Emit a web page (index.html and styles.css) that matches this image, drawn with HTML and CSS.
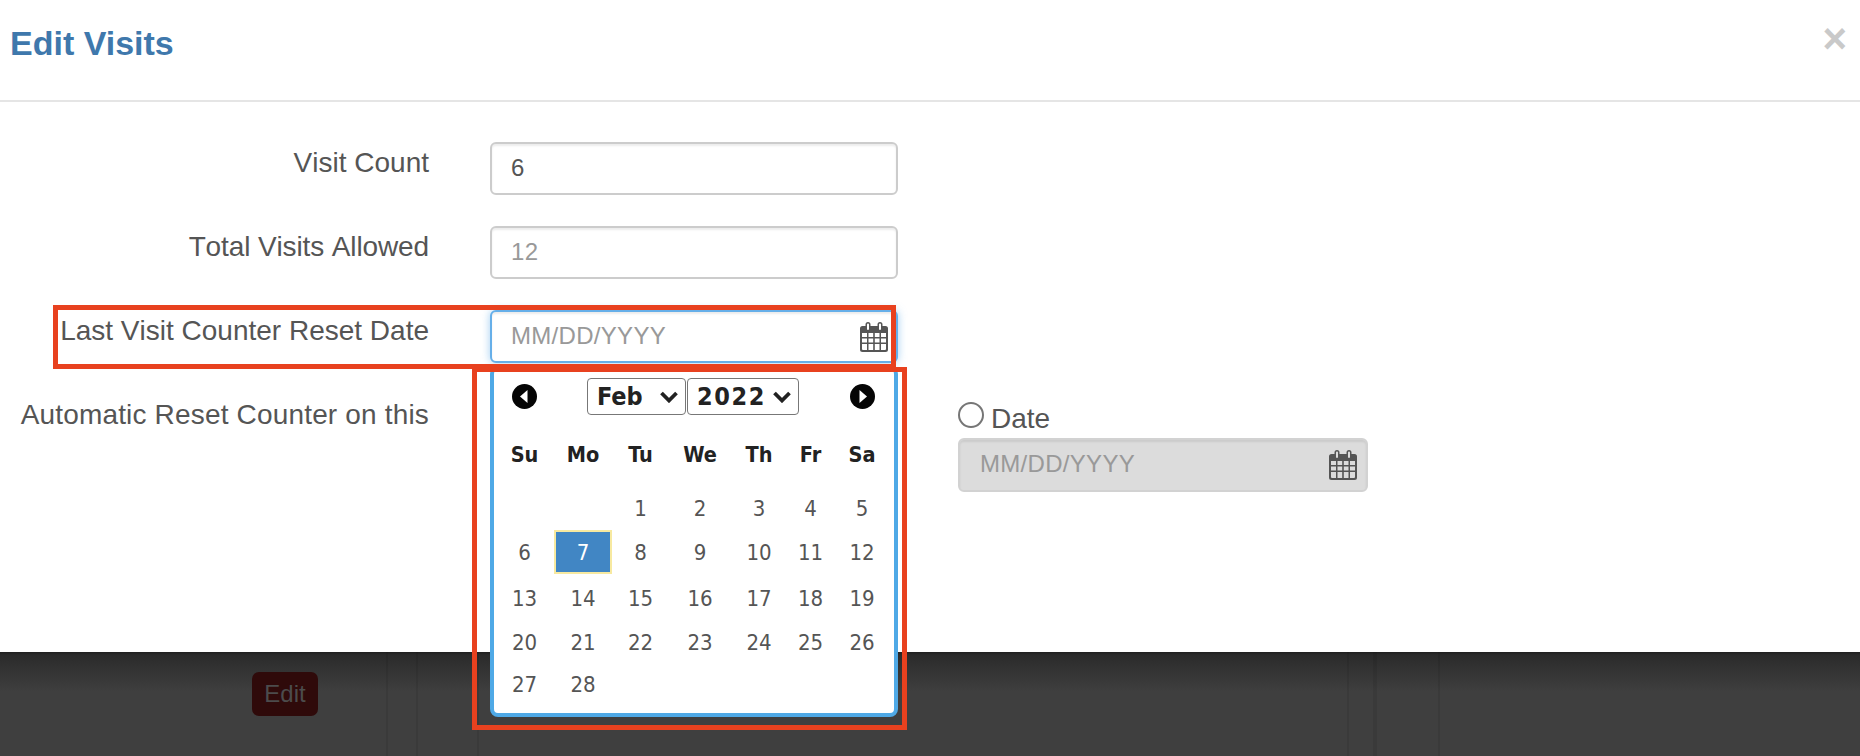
FILE: index.html
```html
<!DOCTYPE html>
<html lang="en">
<head>
<meta charset="utf-8">
<title>Edit Visits</title>
<link rel="stylesheet" href="styles.css">
</head>
<body>
<svg class="sprite" width="0" height="0" aria-hidden="true">
  <defs>
    <symbol id="cal" viewBox="0 0 28 30">
      <path fill="#555" fill-rule="evenodd" d="M2.5 4H5.5V2.5a2.5 2.5 0 0 1 5 0V4H17.500V2.500a2.500 2.500 0 0 1 5 0V4H25.500A2.500 2.500 0 0 1 28 6.500V27.500A2.500 2.500 0 0 1 25.500 30H2.500A2.500 2.500 0 0 1 0 27.500V6.500A2.500 2.500 0 0 1 2.500 4ZM7 2.500V7a1 1 0 0 0 2 0V2.500a1 1 0 0 0-2 0ZM19 2.500V7a1 1 0 0 0 2 0V2.500a1 1 0 0 0-2 0ZM2 11V15H7V11ZM8.500 11V15H13.200V11ZM14.800 11V15H19.500V11ZM21 11V15H26V11ZM2 16.500V20.500H7V16.500ZM8.500 16.500V20.500H13.200V16.500ZM14.800 16.500V20.500H19.500V16.500ZM21 16.500V20.500H26V16.500ZM2 22V27A1 1 0 0 0 3 28H7V22ZM8.500 22V28H13.200V22ZM14.800 22V28H19.500V22ZM21 22V28H25A1 1 0 0 0 26 27V22Z"/>
    </symbol>
    <symbol id="chev" viewBox="0 0 18 12">
      <path fill="none" stroke="#222" stroke-width="3.8" d="M1.500 2L9 9.500L16.500 2"/>
    </symbol>
  </defs>
</svg>

<main class="modal">
  <header class="modal-head">
    <h1 class="modal-title">Edit Visits</h1>
    <span class="close">×</span>
  </header>
  <form class="form">
    <div class="row">
      <label class="label">Visit Count</label>
      <div class="field"><input class="input" type="text" value="6"></div>
    </div>
    <div class="row">
      <label class="label label-tight">Total Visits Allowed</label>
      <div class="field"><input class="input" type="text" placeholder="12"></div>
    </div>
    <div class="row">
      <label class="label">Last Visit Counter Reset Date</label>
      <div class="field">
        <input class="input input-focus" type="text" placeholder="MM/DD/YYYY">
        <svg class="cal-icon"><use href="#cal"/></svg>
        <div class="picker">
          <div class="picker-nav">
            <span class="nav-btn">
              <svg viewBox="0 0 25 25"><circle cx="12.500" cy="12.500" r="12.500" fill="#050505"/><path d="M15.500 6V19L8 12.500Z" fill="#fff"/></svg>
            </span>
            <div class="selects">
              <div class="select select-month">Feb<svg class="chev"><use href="#chev"/></svg></div>
              <div class="select select-year">2022<svg class="chev"><use href="#chev"/></svg></div>
            </div>
            <span class="nav-btn">
              <svg viewBox="0 0 25 25"><circle cx="12.500" cy="12.500" r="12.500" fill="#050505"/><path d="M9.500 6V19L17 12.500Z" fill="#fff"/></svg>
            </span>
          </div>
          <div class="week">
            <span>Su</span><span>Mo</span><span>Tu</span><span>We</span><span>Th</span><span>Fr</span><span>Sa</span>
          </div>
          <div class="days">
            <span></span><span></span><span>1</span><span>2</span><span>3</span><span>4</span><span>5</span>
            <span>6</span><span class="day-on">7</span><span>8</span><span>9</span><span>10</span><span>11</span><span>12</span>
            <span>13</span><span>14</span><span>15</span><span>16</span><span>17</span><span>18</span><span>19</span>
            <span>20</span><span>21</span><span>22</span><span>23</span><span>24</span><span>25</span><span>26</span>
            <span>27</span><span>28</span>
          </div>
        </div>
      </div>
    </div>
    <div class="row">
      <label class="label label-wide">Automatic Reset Counter on this</label>
      <div class="field"></div>
      <div class="date-option">
        <label class="radio-line"><span class="radio"></span><span class="radio-text">Date</span></label>
        <div class="field field-off">
          <input class="input input-off" type="text" placeholder="MM/DD/YYYY" disabled>
          <svg class="cal-icon"><use href="#cal"/></svg>
        </div>
      </div>
    </div>
  </form>
</main>

<section class="backdrop">
  <div class="cell cell-a"><span class="edit-btn">Edit</span></div>
  <div class="cell cell-b"></div>
  <div class="cell cell-c"></div>
  <div class="cell cell-d"></div>
  <div class="cell cell-e"></div>
  <div class="cell cell-f"></div>
  <div class="cell cell-g"></div>
</section>

<div class="mark mark-label"></div>
<div class="mark mark-picker"></div>
</body>
</html>
```
FILE: styles.css
```css
* { box-sizing: border-box; }

html, body {
  margin: 0;
  padding: 0;
}

body {
  position: relative;
  width: 1860px;
  height: 756px;
  overflow: hidden;
  display: flex;
  flex-direction: column;
  background: #fff;
  color: #555;
  font-family: "Liberation Sans", Arial, sans-serif;
}

.sprite { position: absolute; }

.modal {
  height: 652px;
  flex: none;
  background: #fff;
}

.modal-head {
  height: 102px;
  padding: 0 13px 0 10px;
  display: flex;
  align-items: center;
  justify-content: space-between;
  border-bottom: 2px solid #e5e5e5;
}

.modal-title {
  margin: 0 0 14px;
  font-size: 34px;
  line-height: 40px;
  font-weight: 700;
  color: #3f78ac;
}

.close {
  margin-bottom: 23px;
  font-size: 42px;
  line-height: 40px;
  font-weight: 700;
  color: #c9c9c9;
}

.form {
  padding-top: 40px;
  display: flex;
  flex-direction: column;
  gap: 31px;
}

.row {
  display: flex;
  min-height: 53px;
}

.label {
  width: 429px;
  margin-right: 61px;
  padding-top: 1px;
  flex: none;
  text-align: right;
  font-size: 28px;
  line-height: 40px;
  font-kerning: none;
}

.label-tight { letter-spacing: -.12px; }
.label-wide { letter-spacing: .17px; }

.field {
  position: relative;
  width: 408px;
  height: 53px;
  flex: none;
}

.input {
  display: block;
  width: 100%;
  height: 100%;
  padding: 0 19px 2px;
  border: 2px solid #ccc;
  border-radius: 6px;
  background: #fff;
  box-shadow: inset 0 2px 2px rgba(0, 0, 0, .075);
  font: 24px "Liberation Sans", Arial, sans-serif;
  font-kerning: none;
  letter-spacing: .3px;
  color: #555;
  outline: 0;
}

.input::placeholder {
  color: #999;
  opacity: 1;
}

.input-focus {
  border-color: #66afe9;
  box-shadow: inset 0 2px 2px rgba(0, 0, 0, .075), 0 0 8px rgba(102, 175, 233, .6);
}

.input-off {
  padding-left: 20px;
  background: #dcdcdc;
  border-color: #d2d2d2;
}

.cal-icon {
  position: absolute;
  top: 12px;
  right: 10px;
  width: 28px;
  height: 30px;
}

.field-off .cal-icon { right: 11px; }

.picker {
  position: absolute;
  top: 56px;
  left: 0;
  z-index: 2;
  width: 408px;
  height: 351px;
  padding: 0 0 0 1px;
  border: 4px solid #4fa9e6;
  border-radius: 8px;
  background: #fff;
  font-family: "DejaVu Sans", Verdana, sans-serif;
  font-stretch: condensed;
}

.picker-nav {
  height: 37px;
  margin: 8px 0 17px;
  padding: 0 19.500px 0 16.500px;
  display: flex;
  align-items: center;
  justify-content: space-between;
}

.nav-btn {
  width: 25px;
  height: 25px;
  display: block;
}

.nav-btn svg {
  display: block;
  width: 25px;
  height: 25px;
}

.selects {
  display: flex;
  gap: 1px;
}

.select {
  height: 37px;
  padding-left: 9px;
  display: flex;
  align-items: center;
  border: 1.500px solid #777;
  border-radius: 4px;
  font-size: 25px;
  font-weight: 700;
  color: #222;
}

.select-month { width: 99px; }
.select-year { width: 112px; letter-spacing: 1.600px; }

.chev {
  width: 18px;
  height: 12px;
  margin-left: auto;
  margin-right: 7px;
  flex: none;
}

.week, .days {
  display: grid;
  grid-template-columns: 59px 58px 57px 62px 56px 47px 56px;
  justify-items: center;
  align-items: center;
  text-align: center;
}

.week {
  height: 44px;
  margin-bottom: 10px;
  font-size: 21.500px;
  font-weight: 700;
  color: #222;
}

.days {
  grid-template-rows: 44px 44px 48px 40px 44px;
  font-size: 22px;
  color: #555;
}

.days span {
  display: flex;
  align-items: center;
  justify-content: center;
  width: 100%;
  height: 100%;
}

.days .day-on {
  background: #4186c4;
  border: 2px solid #f7e9a0;
  color: #fff;
}

.date-option {
  width: 410px;
  margin-left: 60px;
  padding-top: 8px;
  flex: none;
}

.date-option .field { width: 410px; height: 54px; }

.radio-line {
  height: 36px;
  display: flex;
  align-items: flex-start;
  gap: 7px;
  font-size: 28px;
  line-height: 32px;
}

.radio-text { padding-top: 1px; }

.radio {
  width: 26px;
  height: 26px;
  border: 2px solid #767676;
  border-radius: 50%;
  background: #fff;
}

.backdrop {
  flex: 1;
  display: flex;
  background: linear-gradient(#1f1f1f 0, #2b2b2b 3px, #3f3f3f 40px);
}

.cell {
  flex: none;
  height: 100%;
  border-right: 2px solid rgba(0, 0, 0, .07);
}

.cell-a { width: 388px; padding: 20px 0 0 252px; }
.cell-b { width: 30px; }
.cell-c { width: 61px; }
.cell-d { width: 870px; }
.cell-e { width: 28px; border-right-width: 4px; }
.cell-f { width: 63px; }
.cell-g { flex: 1; border-right: 0; }

.edit-btn {
  width: 66px;
  height: 44px;
  display: flex;
  align-items: center;
  justify-content: center;
  border-radius: 7px;
  background: #2f0a0a;
  color: #4c4c4c;
  font-size: 24px;
}

.mark {
  position: absolute;
  z-index: 3;
  border: 5px solid #e8411f;
  pointer-events: none;
}

.mark-label {
  left: 53px;
  top: 305px;
  width: 843px;
  height: 64px;
}

.mark-picker {
  left: 472px;
  top: 367px;
  width: 435px;
  height: 363px;
}
```
